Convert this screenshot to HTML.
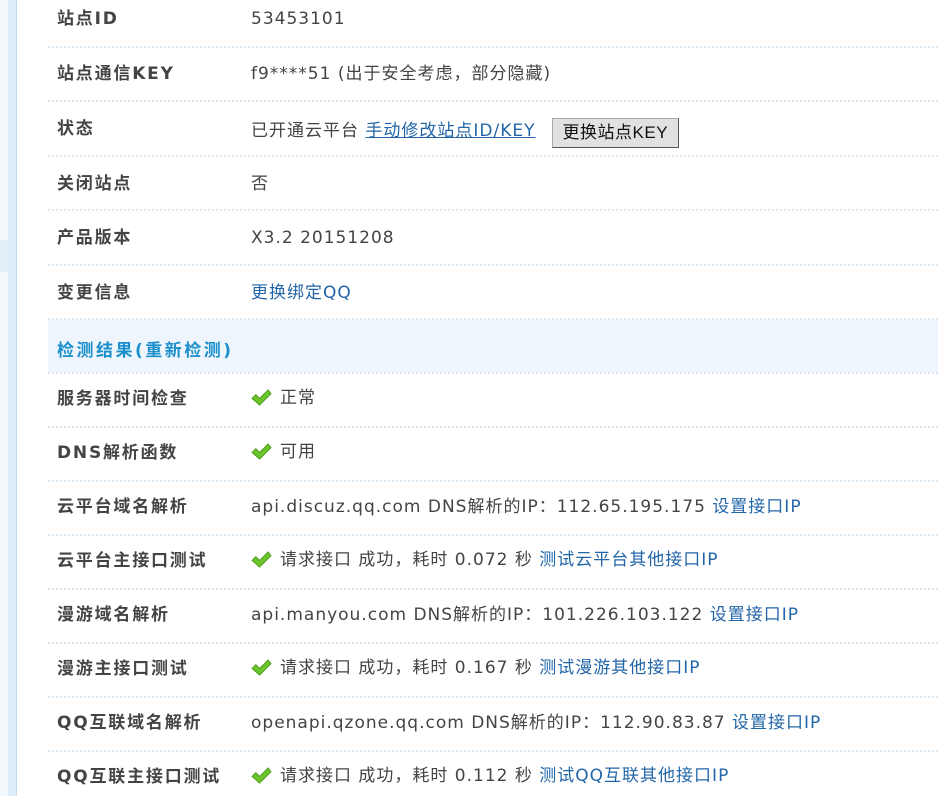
<!DOCTYPE html>
<html><head><meta charset="utf-8"><style>
body{margin:0;width:938px;height:796px;overflow:hidden;background:#fff;position:relative;font-family:"DejaVu Sans","Noto Sans CJK SC",sans-serif;font-size:17px;color:#444}
.s1{position:absolute;left:0;top:0;width:8px;height:796px;background:#f2f8fc}
.s1b{position:absolute;left:0;top:240px;width:8px;height:32px;background:#e2eef8}
.s2{position:absolute;left:8px;top:0;width:8px;height:796px;background:#deedf8;border-right:1px solid #c5dbec}
.sep{position:absolute;left:48px;right:0;height:0;border-top:2px dotted #dbe9f5}
.hd{position:absolute;left:48px;right:0;top:320px;height:52px;background:#eef5fc}
.l{position:absolute;left:57px;font-weight:bold;color:#444;letter-spacing:1.8px;line-height:20px;font-size:17px}
.v{position:absolute;left:251px;line-height:20px;letter-spacing:1px;white-space:nowrap}
a{color:#2366a8;text-decoration:none}
a.u{text-decoration:underline}
.ck{display:inline-block;vertical-align:-3px;margin-right:8px}
.btn{display:inline-block;margin-left:16px;padding:4px 10px;background:#e1e1e1;border:1px solid #aaa;border-right-color:#555;border-bottom-color:#555;color:#111;font-family:"Liberation Sans","Noto Sans CJK SC",sans-serif;font-size:17px;letter-spacing:0.5px;vertical-align:-2px}
.h{position:absolute;left:57px;top:336px;color:#1a8fcc;font-weight:bold;letter-spacing:2.5px;font-size:17px}
</style></head><body>
<div class="s1"></div><div class="s1b"></div><div class="s2"></div>
<div class="hd"></div>
<div class="sep" style="top:46px"></div><div class="sep" style="top:100px"></div><div class="sep" style="top:155px"></div><div class="sep" style="top:209px"></div><div class="sep" style="top:264px"></div><div class="sep" style="top:318px"></div><div class="sep" style="top:372px"></div><div class="sep" style="top:426px"></div><div class="sep" style="top:480px"></div><div class="sep" style="top:534px"></div><div class="sep" style="top:588px"></div><div class="sep" style="top:642px"></div><div class="sep" style="top:696px"></div><div class="sep" style="top:750px"></div>
<svg width="0" height="0" style="position:absolute"><defs><symbol id="c" viewBox="0 0 22 18"><path d="M1 10 L5 6 L9 10 L18 1 L21 5 L9 17 Z" fill="#6ac62a" stroke="#4b9a1a" stroke-width="1"/></symbol></defs></svg>

<div class="l" style="top:9px">站点ID</div><div class="v" style="top:9px">53453101</div>
<div class="l" style="top:64px">站点通信KEY</div><div class="v" style="top:64px">f9****51 (出于安全考虑，部分隐藏)</div>
<div class="l" style="top:119px">状态</div><div class="v" style="top:118px">已开通云平台 <a class="u">手动修改站点ID/KEY</a><span class="btn">更换站点KEY</span></div>
<div class="l" style="top:174px">关闭站点</div><div class="v" style="top:174px">否</div>
<div class="l" style="top:228px">产品版本</div><div class="v" style="top:228px">X3.2 20151208</div>
<div class="l" style="top:283px">变更信息</div><div class="v" style="top:283px"><a>更换绑定QQ</a></div>
<div class="h">检测结果(重新检测)</div>
<div class="l" style="top:389px">服务器时间检查</div><div class="v" style="top:388px"><svg class="ck" width="21" height="17"><use href="#c"/></svg>正常</div>
<div class="l" style="top:443px">DNS解析函数</div><div class="v" style="top:442px"><svg class="ck" width="21" height="17"><use href="#c"/></svg>可用</div>
<div class="l" style="top:497px">云平台域名解析</div><div class="v" style="top:497px">api.discuz.qq.com DNS解析的IP：112.65.195.175 <a>设置接口IP</a></div>
<div class="l" style="top:551px">云平台主接口测试</div><div class="v" style="top:550px"><svg class="ck" width="21" height="17"><use href="#c"/></svg>请求接口 成功，耗时 0.072 秒 <a>测试云平台其他接口IP</a></div>
<div class="l" style="top:605px">漫游域名解析</div><div class="v" style="top:605px">api.manyou.com DNS解析的IP：101.226.103.122 <a>设置接口IP</a></div>
<div class="l" style="top:659px">漫游主接口测试</div><div class="v" style="top:658px"><svg class="ck" width="21" height="17"><use href="#c"/></svg>请求接口 成功，耗时 0.167 秒 <a>测试漫游其他接口IP</a></div>
<div class="l" style="top:713px">QQ互联域名解析</div><div class="v" style="top:713px">openapi.qzone.qq.com DNS解析的IP：112.90.83.87 <a>设置接口IP</a></div>
<div class="l" style="top:767px">QQ互联主接口测试</div><div class="v" style="top:766px"><svg class="ck" width="21" height="17"><use href="#c"/></svg>请求接口 成功，耗时 0.112 秒 <a>测试QQ互联其他接口IP</a></div>
</body></html>
